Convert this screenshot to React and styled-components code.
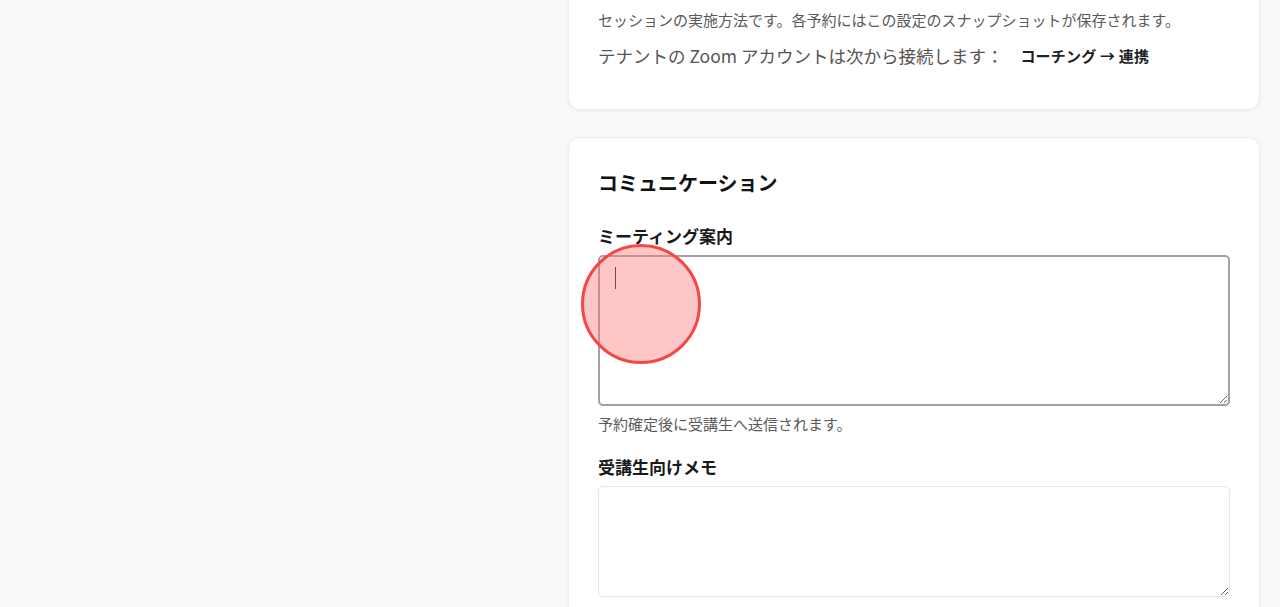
import React from "react"
import styled, { createGlobalStyle } from "styled-components"

const GlobalStyle = createGlobalStyle`
  html, body {
    margin: 0;
    padding: 0;
    background: #f9f9f9;
    height: 607px;
    overflow: hidden;
  }
  body {
    font-family: "Noto Sans CJK JP", "Noto Sans", sans-serif;
    color: #1f1f1f;
  }
`

const Page = styled.div`
  position: relative;
  display: grid;
  grid-template-columns: 1fr 692px;
  padding-right: 20px;
  min-height: 607px;
`

const Side = styled.aside``

const Stack = styled.main`
  display: flex;
  flex-direction: column;
  gap: 27px;
  margin-top: -38px;
`

const Card = styled.section`
  background: #fff;
  border: 1px solid #ececec;
  border-radius: 12px;
  box-shadow: 0 1px 4px rgba(0, 0, 0, 0.06);
  padding: ${p => p.pad || "29px"};
`

const Help = styled.p`
  margin: ${p => p.m || "0"};
  font-size: 15px;
  line-height: 22px;
  color: #5a5a5a;
`

const ZoomLine = styled.div`
  display: flex;
  align-items: center;
  margin-top: 11px;
  font-size: 17.5px;
  line-height: 28px;
  color: #555;
`

const LinkText = styled.span`
  margin-left: 17px;
  font-size: 15px;
  font-weight: 700;
  letter-spacing: 0.2px;
  color: #222;
`

const Title = styled.h2`
  margin: 0 0 25px;
  font-size: 20px;
  line-height: 32px;
  font-weight: 700;
  color: #111;
`

const Label = styled.label`
  display: block;
  font-size: 17px;
  line-height: 24px;
  font-weight: 600;
  color: #1a1a1a;
  margin-bottom: 7px;
`

const FieldWrap = styled.div`
  position: relative;
`

const Area = styled.textarea`
  display: block;
  box-sizing: border-box;
  width: 100%;
  height: ${p => p.h}px;
  margin: 0;
  padding: 11px 16px;
  font: 16px/22px "Noto Sans CJK JP", "Noto Sans", sans-serif;
  border-radius: 5px;
  border: ${p => (p.focused ? "2px solid #a0a0a6" : "1px solid #e6e6e6")};
  outline: none;
  background: #fff;
  resize: vertical;
`

const Caret = styled.span`
  position: absolute;
  left: 17px;
  top: 12px;
  width: 1px;
  height: 22px;
  background: #222;
`

const Field = styled.div`
  margin-bottom: ${p => p.mb || "0"};
`

const Tap = styled.div`
  position: absolute;
  left: 581px;
  top: 244px;
  width: 114px;
  height: 114px;
  border-radius: 50%;
  border: 3px solid #f44848;
  background: rgba(255, 120, 120, 0.42);
  pointer-events: none;
`

export default function App() {
  return (
    <>
      <GlobalStyle />
      <Page>
        <Side />
        <Stack>
          <Card pad="29px 29px 39px">
            <Help m="17px 0 0">
              セッションの実施方法です。各予約にはこの設定のスナップショットが保存されます。
            </Help>
            <ZoomLine>
              テナントの Zoom アカウントは次から接続します：
              <LinkText>コーチング → 連携</LinkText>
            </ZoomLine>
          </Card>
          <Card>
            <Title>コミュニケーション</Title>
            <Field>
              <Label>ミーティング案内</Label>
              <FieldWrap>
                <Area h={151} focused />
                <Caret />
              </FieldWrap>
              <Help m="7px 0 20px">予約確定後に受講生へ送信されます。</Help>
            </Field>
            <Field>
              <Label>受講生向けメモ</Label>
              <Area h={111} />
            </Field>
          </Card>
        </Stack>
        <Tap />
      </Page>
    </>
  )
}
